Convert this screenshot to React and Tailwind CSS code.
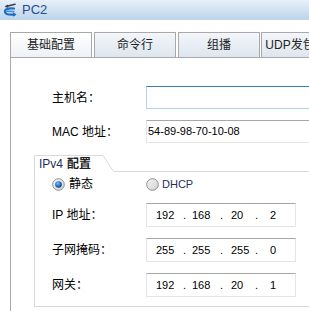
const FONT = { fontFamily: "'Liberation Sans', 'Noto Sans CJK SC', sans-serif" };

function PcIcon() {
  return (
    <svg width="16" height="16" viewBox="0 0 16 16" className="flex-none">
      <path d="M4 4.5 L13 2.2" stroke="#3a3f48" strokeWidth="1.6" strokeLinecap="round" />
      <path d="M3 4.6 L6 2.6 L6.2 6 Z" fill="#3a3f48" />
      <path d="M12 6.5 C6 5.8 2.5 7.5 3 10 C3.4 12.2 7 13 12.5 12.6" stroke="#1f6fc4" strokeWidth="2.2" fill="none" strokeLinecap="round" />
      <path d="M5 9.2 L12 9.5" stroke="#3b8ee0" strokeWidth="1.4" strokeLinecap="round" />
      <path d="M14.5 12.5 L11 10.2 L11 14.8 Z" fill="#1f6fc4" />
    </svg>
  );
}

function Radio({ checked }) {
  return (
    <svg width="13" height="13" viewBox="0 0 13 13" className="flex-none">
      <defs>
        <linearGradient id={checked ? 'rg1' : 'rg0'} x1="0" y1="0" x2="1" y2="1">
          <stop offset="0" stopColor="#f7f7f7" />
          <stop offset="1" stopColor="#cfcfcf" />
        </linearGradient>
        <radialGradient id="dot" cx="0.4" cy="0.35" r="0.7">
          <stop offset="0" stopColor="#7fc2ff" />
          <stop offset="0.6" stopColor="#1a6ec4" />
          <stop offset="1" stopColor="#0b3f80" />
        </radialGradient>
      </defs>
      <circle cx="6.5" cy="6.5" r="5.8" fill={`url(#${checked ? 'rg1' : 'rg0'})`} stroke="#8e8e8e" strokeWidth="1" />
      {checked && <circle cx="6.5" cy="6.5" r="3.3" fill="url(#dot)" />}
    </svg>
  );
}

function IpBox({ parts }) {
  const widths = ['w-[27px]', 'w-[9px]', 'w-[28px]', 'w-[11px]', 'w-[24px]', 'w-[15px]', 'w-[20px]'];
  const items = [parts[0], '.', parts[1], '.', parts[2], '.', parts[3]];
  return (
    <div className="flex h-[24px] w-[150px] items-center border border-t-[#a7a7a7] border-x-[#e1e5ea] border-b-[#e1e5ea] pl-[9px] text-[11px] text-black">
      {items.map((t, i) => (
        <span key={i} className={widths[i]}>{t}</span>
      ))}
    </div>
  );
}

function Row({ label, children, className = '' }) {
  return (
    <div className={`flex items-center ${className}`}>
      <span className="w-[94px] flex-none text-[12px] text-black">{label}</span>
      {children}
    </div>
  );
}

export default function App() {
  const tabs = ['基础配置', '命令行', '组播', 'UDP发包工具'];
  return (
    <div className="h-[311px] w-[309px] overflow-hidden bg-white" style={FONT}>
      <div className="flex h-[20px] items-center gap-[4px] bg-linear-to-b from-[#e8f0f9] to-[#bcd3ea] pl-[2px]">
        <PcIcon />
        <span className="text-[13px] text-[#1d4f8e]">PC2</span>
      </div>

      <div className="mt-[12px] flex h-[25px] gap-[2px] pl-[10px]">
        {tabs.map((t, i) => (
          <div
            key={t}
            className={`flex h-[25px] w-[82px] flex-none items-center justify-center whitespace-nowrap border border-b-0 border-[#a9a9a9] text-[12px] text-[#222] ${
              i === 0 ? 'bg-linear-to-b from-white to-[#eef2f7]' : 'bg-linear-to-b from-[#f3f6fa] to-[#dde6ef]'
            } ${i === 3 ? 'ml-[-1px]' : ''}`}
          >
            {t}
          </div>
        ))}
      </div>

      <div className="ml-[10px] h-[260px] border-l border-t border-[#a9a9a9]">
        <div className="flex flex-col gap-[11px] pl-[41px] pt-[28px]">
          <Row label="主机名：">
            <div className="h-[23px] w-[200px] flex-none border border-t-[#3d7bb0] border-x-[#b4d3ee] border-b-[#b4d3ee]" />
          </Row>
          <Row label="MAC 地址：">
            <div className="flex h-[23px] w-[200px] flex-none items-center border border-t-[#a7a7a7] border-x-[#e1e5ea] border-b-[#e1e5ea] pl-[1px] text-[11px] text-black">
              54-89-98-70-10-08
            </div>
          </Row>
        </div>

        <div className="ml-[23px] mt-[12px] border-b border-l border-[#d9d9d9] pb-[9px]">
          <div className="flex h-[17px]">
            <div className="flex w-[68px] flex-none items-center border-t border-[#d9d9d9] pl-[4px] text-[12px]">
              <span className="text-[#1f2f5c]">IPv4</span>
              <span className="ml-[4px] font-bold text-[#222]">配置</span>
            </div>
            <svg width="11" height="17" className="flex-none">
              <path d="M0 0.5 L10.5 16.5" stroke="#d9d9d9" strokeWidth="1" />
            </svg>
            <div className="flex-1 border-b border-[#d9d9d9]" />
          </div>

          <div className="flex flex-col pl-[17px]">
            <div className="mt-[4px] flex h-[16px] items-center">
              <div className="flex w-[94px] flex-none items-center gap-[4px]">
                <Radio checked />
                <span className="text-[12px] text-black">静态</span>
              </div>
              <div className="flex items-center gap-[3px]">
                <Radio />
                <span className="text-[11px] text-[#1f2f5c]">DHCP</span>
              </div>
            </div>
            <div className="mt-[11px] flex flex-col gap-[11px]">
              <Row label="IP 地址：">
                <IpBox parts={['192', '168', '20', '2']} />
              </Row>
              <Row label="子网掩码：">
                <IpBox parts={['255', '255', '255', '0']} />
              </Row>
              <Row label="网关：">
                <IpBox parts={['192', '168', '20', '1']} />
              </Row>
            </div>
          </div>
        </div>
      </div>
    </div>
  );
}
